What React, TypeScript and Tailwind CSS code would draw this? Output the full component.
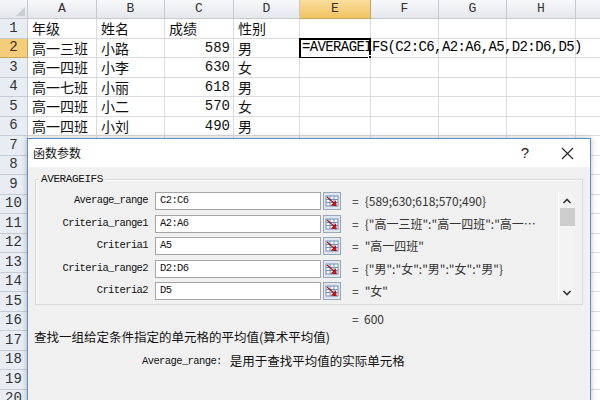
import React from 'react';

const cols = [
  { name: 'A', w: 69 },
  { name: 'B', w: 68 },
  { name: 'C', w: 69 },
  { name: 'D', w: 66 },
  { name: 'E', w: 71 },
  { name: 'F', w: 68 },
  { name: 'G', w: 68 },
  { name: 'H', w: 69 },
  { name: '', w: 70 },
];

const data: string[][] = [
  ['年级', '姓名', '成绩', '性别'],
  ['高一三班', '小路', '589', '男'],
  ['高一四班', '小李', '630', '女'],
  ['高一七班', '小丽', '618', '男'],
  ['高一四班', '小二', '570', '女'],
  ['高一四班', '小刘', '490', '男'],
];

const cjk = { fontFamily: '"Noto Sans CJK SC", "Noto Sans", sans-serif' };
const mono = { fontFamily: '"Liberation Mono", "Noto Sans CJK SC", monospace' };

const args = [
  { label: 'Average_range', ref: 'C2:C6', value: '{589;630;618;570;490}' },
  { label: 'Criteria_range1', ref: 'A2:A6', value: '{"高一三班":"高一四班":"高一…' },
  { label: 'Criteria1', ref: 'A5', value: '"高一四班"' },
  { label: 'Criteria_range2', ref: 'D2:D6', value: '{"男":"女":"男":"女":"男"}' },
  { label: 'Criteria2', ref: 'D5', value: '"女"' },
];

function RefButton() {
  return (
    <svg width="18" height="18" viewBox="0 0 18 18" className="shrink-0">
      <rect x="0.5" y="0.5" width="17" height="17" fill="#dfe6ef" stroke="#9aa7b7" />
      <rect x="3" y="4" width="12" height="10" fill="#ffffff" stroke="#6f8fb8" />
      <line x1="3" y1="7.5" x2="15" y2="7.5" stroke="#6f8fb8" />
      <line x1="3" y1="10.5" x2="15" y2="10.5" stroke="#6f8fb8" />
      <line x1="7" y1="4" x2="7" y2="14" stroke="#6f8fb8" />
      <line x1="11" y1="4" x2="11" y2="14" stroke="#6f8fb8" />
      <path d="M4 5 L11 11 L9 13 L13 13.5 L12.5 9.5 L11 11" fill="#d8262c" stroke="#b01010" strokeWidth="1.2" />
    </svg>
  );
}

function Sheet() {
  const rows = Array.from({ length: 20 }, (_, i) => i + 1);
  return (
    <div className="flex flex-col">
      <div className="flex h-[19px]">
        <div className="relative w-[28px] shrink-0 border-r border-b border-[#c6c9ce] bg-gradient-to-b from-[#f6f7f9] to-[#e3e6ea]">
          <div className="absolute right-[2px] bottom-[2px] w-0 h-0 border-l-[9px] border-l-transparent border-b-[9px] border-b-[#c9ccd1]" />
        </div>
        {cols.map((c, i) => (
          <div
            key={i}
            style={{ width: c.w, ...mono }}
            className={`shrink-0 flex items-center justify-center border-r border-b text-[13px] text-[#333] ${
              c.name === 'E'
                ? 'bg-gradient-to-b from-[#f9dd9c] to-[#f2c35f] border-[#c5a55f]'
                : 'bg-gradient-to-b from-[#f7f8fa] to-[#e4e7eb] border-[#c6c9ce]'
            }`}
          >
            {c.name}
          </div>
        ))}
      </div>
      {rows.map((r) => (
        <div key={r} className="flex h-[19.5px]">
          <div
            style={mono}
            className={`w-[28px] shrink-0 flex items-center justify-center border-r border-b text-[14px] text-[#333] ${
              r === 2 ? 'bg-[#f5cd78] border-[#c5a55f]' : 'bg-[#e8edf3] border-[#c6ccd4]'
            }`}
          >
            {r}
          </div>
          {cols.map((c, ci) => {
            const v = data[r - 1]?.[ci];
            const isNum = v !== undefined && /^\d+$/.test(v);
            const selected = r === 2 && c.name === 'E';
            return (
              <div
                key={ci}
                style={{ width: c.w, ...(isNum ? mono : cjk) }}
                className={`relative shrink-0 flex items-center border-r border-b border-[#dadcdf] bg-white text-[14px] leading-none text-[#111] ${
                  isNum ? 'justify-end pr-[3px]' : 'pl-[4px]'
                }`}
              >
                {v}
                {selected && (
                  <>
                    <div className="absolute -left-[1px] -top-[1px] w-[72px] h-[21px] border-2 border-black" />
                    <div className="absolute -right-[3px] -bottom-[3px] w-[5px] h-[5px] bg-black border border-white" />
                    <div
                      style={mono}
                      className="absolute left-[2px] top-[1px] whitespace-nowrap text-[14px] tracking-[-0.63px] text-black z-10"
                    >
                      =AVERAGEIFS(C2:C6,A2:A6,A5,D2:D6,D5)
                    </div>
                  </>
                )}
              </div>
            );
          })}
        </div>
      ))}
    </div>
  );
}

function Dialog() {
  return (
    <div className="absolute left-[27px] top-[138px] w-[564px] h-[280px] border border-[#5b8fc7] bg-[#f0f0f0] shadow-[0_0_6px_rgba(0,0,0,0.25)] flex flex-col">
      <div className="h-[28px] bg-white flex items-center pl-[5px] pr-[16px]" style={cjk}>
        <span className="text-[12px] text-[#111]">函数参数</span>
        <span className="ml-auto text-[15px] text-[#222] mr-[32px]" style={{ fontFamily: '"Liberation Sans", sans-serif' }}>?</span>
        <svg width="13" height="13" viewBox="0 0 13 13">
          <path d="M1 1 L12 12 M12 1 L1 12" stroke="#222" strokeWidth="1.1" />
        </svg>
      </div>
      <div className="relative mx-[7px] mt-[12px] border border-[#d9d9d9] shadow-[inset_1px_1px_0_#fff] flex pt-[12px] pb-[4px]">
        <div
          style={mono}
          className="absolute -top-[8px] left-[3px] px-[2px] bg-[#f0f0f0] text-[11px] text-[#111] leading-[14px] tracking-[-0.4px]"
        >
          AVERAGEIFS
        </div>
        <div className="flex-1 flex flex-col gap-[4.5px]">
          {args.map((a) => (
            <div key={a.label} className="flex items-center h-[18px]">
              <div style={mono} className="w-[112px] text-right text-[10.5px] tracking-[-0.6px] text-[#111]">
                {a.label}
              </div>
              <div
                style={mono}
                className="ml-[7px] w-[166px] h-[18px] border border-[#a5a5a5] bg-white flex items-center pl-[4px] text-[10.5px] tracking-[-0.6px] text-[#111]"
              >
                {a.ref}
              </div>
              <div className="ml-[2px]">
                <RefButton />
              </div>
              <span style={cjk} className="ml-[11px] text-[12px] text-[#333]">=</span>
              <span style={cjk} className="ml-[6px] text-[12px] text-[#333] whitespace-nowrap">
                {a.value}
              </span>
            </div>
          ))}
        </div>
        <div className="w-[17px] mr-[7px] bg-[#f3f3f3] border-l border-white flex flex-col items-center">
          <svg width="10" height="8" viewBox="0 0 10 8" className="mt-[5px]">
            <path d="M1.5 6 L5 2.5 L8.5 6" stroke="#333" strokeWidth="1.6" fill="none" />
          </svg>
          <div className="mt-[3px] w-[15px] h-[18px] bg-[#cdcdcd]" />
          <svg width="10" height="8" viewBox="0 0 10 8" className="mt-auto mb-[3px]">
            <path d="M1.5 2 L5 5.5 L8.5 2" stroke="#333" strokeWidth="1.6" fill="none" />
          </svg>
        </div>
      </div>
      <div style={cjk} className="mt-[6px] pl-[324px] text-[12px] text-[#333] leading-[16px]">
        =&nbsp;&nbsp;600
      </div>
      <div style={cjk} className="mt-[1px] pl-[6px] text-[12.5px] text-[#111] leading-[18px]">
        查找一组给定条件指定的单元格的平均值(算术平均值)
      </div>
      <div className="mt-[6px] pl-[114px] flex items-center leading-[18px]">
        <span style={mono} className="text-[10.5px] tracking-[-0.6px] text-[#111]">Average_range:</span>
        <span style={cjk} className="ml-[8px] text-[12.5px] text-[#111]">是用于查找平均值的实际单元格</span>
      </div>
    </div>
  );
}

export default function App() {
  return (
    <div className="relative w-[600px] h-[400px] overflow-hidden bg-white">
      <Sheet />
      <Dialog />
    </div>
  );
}
